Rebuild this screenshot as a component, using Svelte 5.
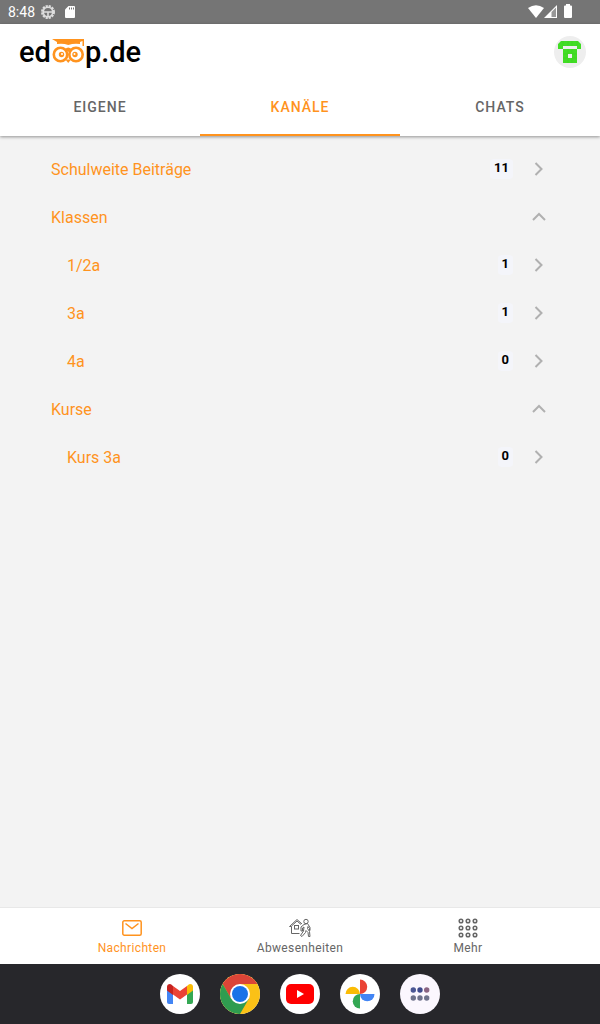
<script lang="ts">
	type Row = {
		label: string;
		count?: number;
		child?: boolean;
	};

	const tabs = ['Eigene', 'Kanäle', 'Chats'];
	let activeTab = $state('Kanäle');
	let activeNav = $state('Nachrichten');

	const rows: Row[] = [
		{ label: 'Schulweite Beiträge', count: 11 },
		{ label: 'Klassen' },
		{ label: '1/2a', count: 1, child: true },
		{ label: '3a', count: 1, child: true },
		{ label: '4a', count: 0, child: true },
		{ label: 'Kurse' },
		{ label: 'Kurs 3a', count: 0, child: true }
	];

	const dots = [3, 10, 17];
</script>

<div class="screen">
	<div class="status">
		<span class="time">8:48</span>
		<svg width="14" height="14" viewBox="0 0 14 14" fill="none" stroke="#dedede">
			<circle cx="7" cy="7" r="6" stroke-width="2" stroke-dasharray="2.2 .94" />
			<circle cx="7" cy="7" r="4.7" stroke-width="1.6" />
			<path d="M2.5 7h9M7 7v4.5" stroke-width="1.6" />
		</svg>
		<svg class="sd" width="10" height="12" viewBox="0 0 10 12">
			<path d="M3.5 0H9q1 0 1 1v10q0 1-1 1H1q-1 0-1-1V3.5z" fill="#fff" />
			<path d="M4.5 1.5v2M6.5 1.5v2M8.5 1.5v2" stroke="#757575" />
		</svg>
		<span class="space"></span>
		<svg width="16" height="14" viewBox="0 0 16 14">
			<path d="M0 3Q8-2.5 16 3L8 13z" fill="#fff" />
		</svg>
		<svg width="13" height="14" viewBox="0 0 13 14">
			<path d="M13 0v13H0z" fill="#fff" />
			<path d="M7.5 7L12 2.5V12H7.5z" fill="#757575" opacity=".75" />
		</svg>
		<svg class="battery" width="8" height="16" viewBox="0 0 8 16">
			<path d="M2 1.5V0h4v1.5h1q1 0 1 1V13q0 1-1 1H1q-1 0-1-1V2.5q0-1 1-1z" fill="#fff" />
		</svg>
	</div>

	<header>
		<div class="bar">
			<div class="logo">
				<span>ed</span>
				<svg width="34" height="26" viewBox="0 0 34 26">
					<path d="M1 0h32v7h-1.5V2L29 3v2q-6-1-11.700 1Q12 4 6 5V3z" fill="#ff931e" />
					<g fill="#fff" stroke="#ff931e">
						<circle cx="9.5" cy="15.5" r="6.7" stroke-width="2.6" />
						<circle cx="25" cy="15.5" r="6.7" stroke-width="2.6" />
					</g>
					<g fill="#ff931e">
						<path d="M14 10q3.300-3 6.500 0l-3.200 3z" />
						<path d="M14.5 20.5H20L17.2 24z" />
						<circle cx="10.5" cy="15.5" r="2.7" />
						<circle cx="24" cy="15.5" r="2.7" />
					</g>
					<circle cx="11" cy="15" r="1" fill="#fff" />
					<circle cx="23.5" cy="15" r="1" fill="#fff" />
				</svg>
				<span>p.de</span>
			</div>
			<button class="avatar" aria-label="Profil">
				<svg width="24" height="24" viewBox="0 0 24 24">
					<path
						d="M3 1h17l3 3v5h-4v14H5V9H0V4zM5 6v3h14V6zM10 14v4h4v-4z"
						fill="#41dd24"
						fill-rule="evenodd"
					/>
					<path
						d="M5 1v5M10 1v5M14 1v5M19 1v5M10 9v5M14 9v5M10 18v5M14 18v5M5 14h5M14 14h5M5 18h5M14 18h5"
						stroke="#38cb20"
						stroke-width=".4"
					/>
				</svg>
			</button>
		</div>
		<div class="tabs">
			{#each tabs as tab}
				<button class="tab" class:active={activeTab === tab} onclick={() => (activeTab = tab)}>
					{tab}
				</button>
			{/each}
		</div>
	</header>

	<main>
		{#each rows as row}
			<button class="row" class:child={row.child}>
				<span class="label">{row.label}</span>
				{#if row.count !== undefined}
					<span class="badge">{row.count}</span>
				{/if}
				<svg class="arrow" width="16" height="16" viewBox="0 0 16 16">
					<path d={row.count === undefined ? 'M2 11l6-6 6 6' : 'M4.5 2l6 6-6 6'} />
				</svg>
			</button>
		{/each}
	</main>

	<nav>
		<button class:active={activeNav === 'Nachrichten'} onclick={() => (activeNav = 'Nachrichten')}>
			<svg width="24" height="20" viewBox="0 0 24 20">
				<rect x="2.8" y="2.8" width="18.4" height="14.4" rx="1.5" stroke-width="1.5" />
				<path d="M5.5 5.5l6.5 5 6.5-5" stroke-width="1.5" />
			</svg>
			Nachrichten
		</button>
		<button class:active={activeNav === 'Abwesenheiten'} onclick={() => (activeNav = 'Abwesenheiten')}>
			<svg width="24" height="20" viewBox="0 0 24 20">
				<path d="M1.5 8.5L9 1.5 14 6M1.5 8.5h2v7h8M3.5 8L9 3l4 3.5" />
				<rect x="6.5" y="7.5" width="4" height="3.5" />
				<circle cx="18" cy="3.5" r="2.2" />
				<path
					d="M16 6.5L13 9v4h1.500v-3l1.500-1-.5 4-3 4.500 1.500 1 3.500-4 .5-2 2 2 .5 4H22l-.5-5-2-3 .5-2 1.500 2v2H22v-3l-2.500-4z"
				/>
			</svg>
			Abwesenheiten
		</button>
		<button class:active={activeNav === 'Mehr'} onclick={() => (activeNav = 'Mehr')}>
			<svg width="20" height="20" viewBox="0 0 20 20">
				{#each dots as y}
					{#each dots as x}
						<circle cx={x} cy={y} r="1.8" stroke-width="1.5" />
					{/each}
				{/each}
			</svg>
			Mehr
		</button>
	</nav>

	<div class="dock">
		<button aria-label="Gmail">
			<svg viewBox="0 0 40 40">
				<path d="M7 14v14q0 2 2 2h4V16z" fill="#4285f4" />
				<path d="M27 16v14h4q2 0 2-2V14z" fill="#34a853" />
				<path d="M27 12v9l6-4.5V13q0-3-3-3-1 0-3 2z" fill="#fbbc04" />
				<path d="M13 12v9l-6-4.5V13q0-3 3-3 1 0 3 2z" fill="#c5221f" />
				<path d="M13 12v8.5l7 5 7-5V12l-7 5z" fill="#ea4335" />
			</svg>
		</button>
		<button aria-label="Chrome">
			<svg viewBox="0 0 40 40">
				<circle cx="20" cy="20" r="20" fill="#fbc116" />
				<path d="M2.7 10A20 20 0 0 1 37.3 10H20L11.3 25z" fill="#db4437" />
				<path d="M2.7 10A20 20 0 0 0 20 40l8.7-15L20 20l-8.7 5z" fill="#2f9c50" />
				<circle cx="20" cy="20" r="10" fill="#fff" />
				<circle cx="20" cy="20" r="8" fill="#1a73e8" />
			</svg>
		</button>
		<button aria-label="YouTube">
			<svg viewBox="0 0 40 40">
				<rect x="6" y="10" width="28" height="20" rx="5" fill="#f00" />
				<path d="M17 16v8l7-4z" fill="#fff" />
			</svg>
		</button>
		<button aria-label="Fotos">
			<svg viewBox="0 0 40 40">
				<path d="M20 5.5a7.2 7.2 0 0 1 0 14.5z" fill="#ea4335" />
				<path d="M34.5 20a7.2 7.2 0 0 1-14.5 0z" fill="#4285f4" />
				<path d="M20 34.5a7.2 7.2 0 0 1 0-14.5z" fill="#34a853" />
				<path d="M5.5 20a7.2 7.2 0 0 1 14.5 0z" fill="#fbbc04" />
			</svg>
		</button>
		<button class="apps" aria-label="Alle Apps">
			<svg viewBox="0 0 40 40" fill="#6f738c">
				<circle cx="13.3" cy="16" r="2.7" fill="#4b5794" />
				<circle cx="20" cy="16" r="2.7" fill="#3f4b8d" />
				<circle cx="26.7" cy="16" r="2.7" fill="#8a6482" />
				<circle cx="13.3" cy="24" r="2.7" />
				<circle cx="20" cy="24" r="2.7" />
				<circle cx="26.7" cy="24" r="2.7" />
			</svg>
		</button>
	</div>
</div>

<style>
	:global(body) {
		margin: 0;
	}

	.screen {
		display: flex;
		flex-direction: column;
		min-height: 100vh;
		background: #f3f3f3;
		font-family: Roboto, 'Liberation Sans', sans-serif;
	}

	button {
		margin: 0;
		padding: 0;
		border: none;
		background: none;
		font-family: inherit;
		cursor: pointer;
	}

	svg {
		display: block;
		flex: none;
	}

	.status {
		display: flex;
		align-items: center;
		height: 24px;
		padding: 0 28px 0 8px;
		background: #757575;
		color: #fff;
	}

	.time {
		margin-right: 6px;
		font-size: 14px;
	}

	.sd {
		margin-left: 10px;
	}

	.space {
		flex: 1;
	}

	.battery {
		margin-left: 7px;
	}

	header {
		position: relative;
		background: #fff;
		box-shadow: 0 1px 3px rgba(0, 0, 0, 0.4);
	}

	.bar {
		display: flex;
		align-items: center;
		justify-content: space-between;
		height: 56px;
		padding: 0 14px 0 19px;
	}

	.logo {
		display: flex;
		align-items: center;
		color: #000;
		font-size: 29px;
		font-weight: 500;
		line-height: 32px;
	}

	.avatar {
		display: flex;
		align-items: center;
		justify-content: center;
		width: 32px;
		height: 32px;
		border-radius: 50%;
		background: #eee;
	}

	.tabs {
		display: flex;
		height: 56px;
	}

	.tab {
		flex: 1;
		border-bottom: 2px solid transparent;
		color: #666;
		font-size: 14px;
		font-weight: 500;
		letter-spacing: 1px;
		text-transform: uppercase;
	}

	.tab.active {
		border-bottom-color: #ff931e;
		color: #ff931e;
	}

	main {
		flex: 1;
		padding: 9px 51px;
	}

	.row {
		display: flex;
		align-items: center;
		width: 100%;
		height: 48px;
		color: #ff931e;
		font-size: 16px;
		text-align: left;
	}

	.row.child {
		padding-left: 16px;
	}

	.label {
		flex: 1;
	}

	.badge {
		box-sizing: border-box;
		height: 20px;
		margin-right: 18px;
		padding: 0 4px;
		border-radius: 4px;
		background: #f4f5fa;
		color: #000;
		font-size: 13px;
		font-weight: 700;
		line-height: 18px;
	}

	.arrow {
		margin-right: 2px;
		fill: none;
		stroke: #b0b0b0;
		stroke-width: 2;
	}

	nav {
		display: flex;
		justify-content: center;
		height: 56px;
		border-top: 1px solid #e8e8e8;
		background: #fff;
	}

	nav button {
		display: flex;
		flex: 0 1 168px;
		flex-direction: column;
		align-items: center;
		justify-content: center;
		gap: 2px;
		padding-top: 2px;
		color: #666;
		font-size: 12px;
		line-height: 16px;
		letter-spacing: 0.03em;
	}

	nav button.active {
		color: #ff931e;
	}

	nav svg {
		fill: none;
		stroke: currentColor;
	}

	.dock {
		display: flex;
		align-items: center;
		justify-content: center;
		gap: 20px;
		height: 60px;
		background: #27272b;
	}

	.dock button {
		width: 40px;
		height: 40px;
		border-radius: 50%;
		background: #fff;
	}

	.dock .apps {
		background: #fbf7fe;
	}
</style>
